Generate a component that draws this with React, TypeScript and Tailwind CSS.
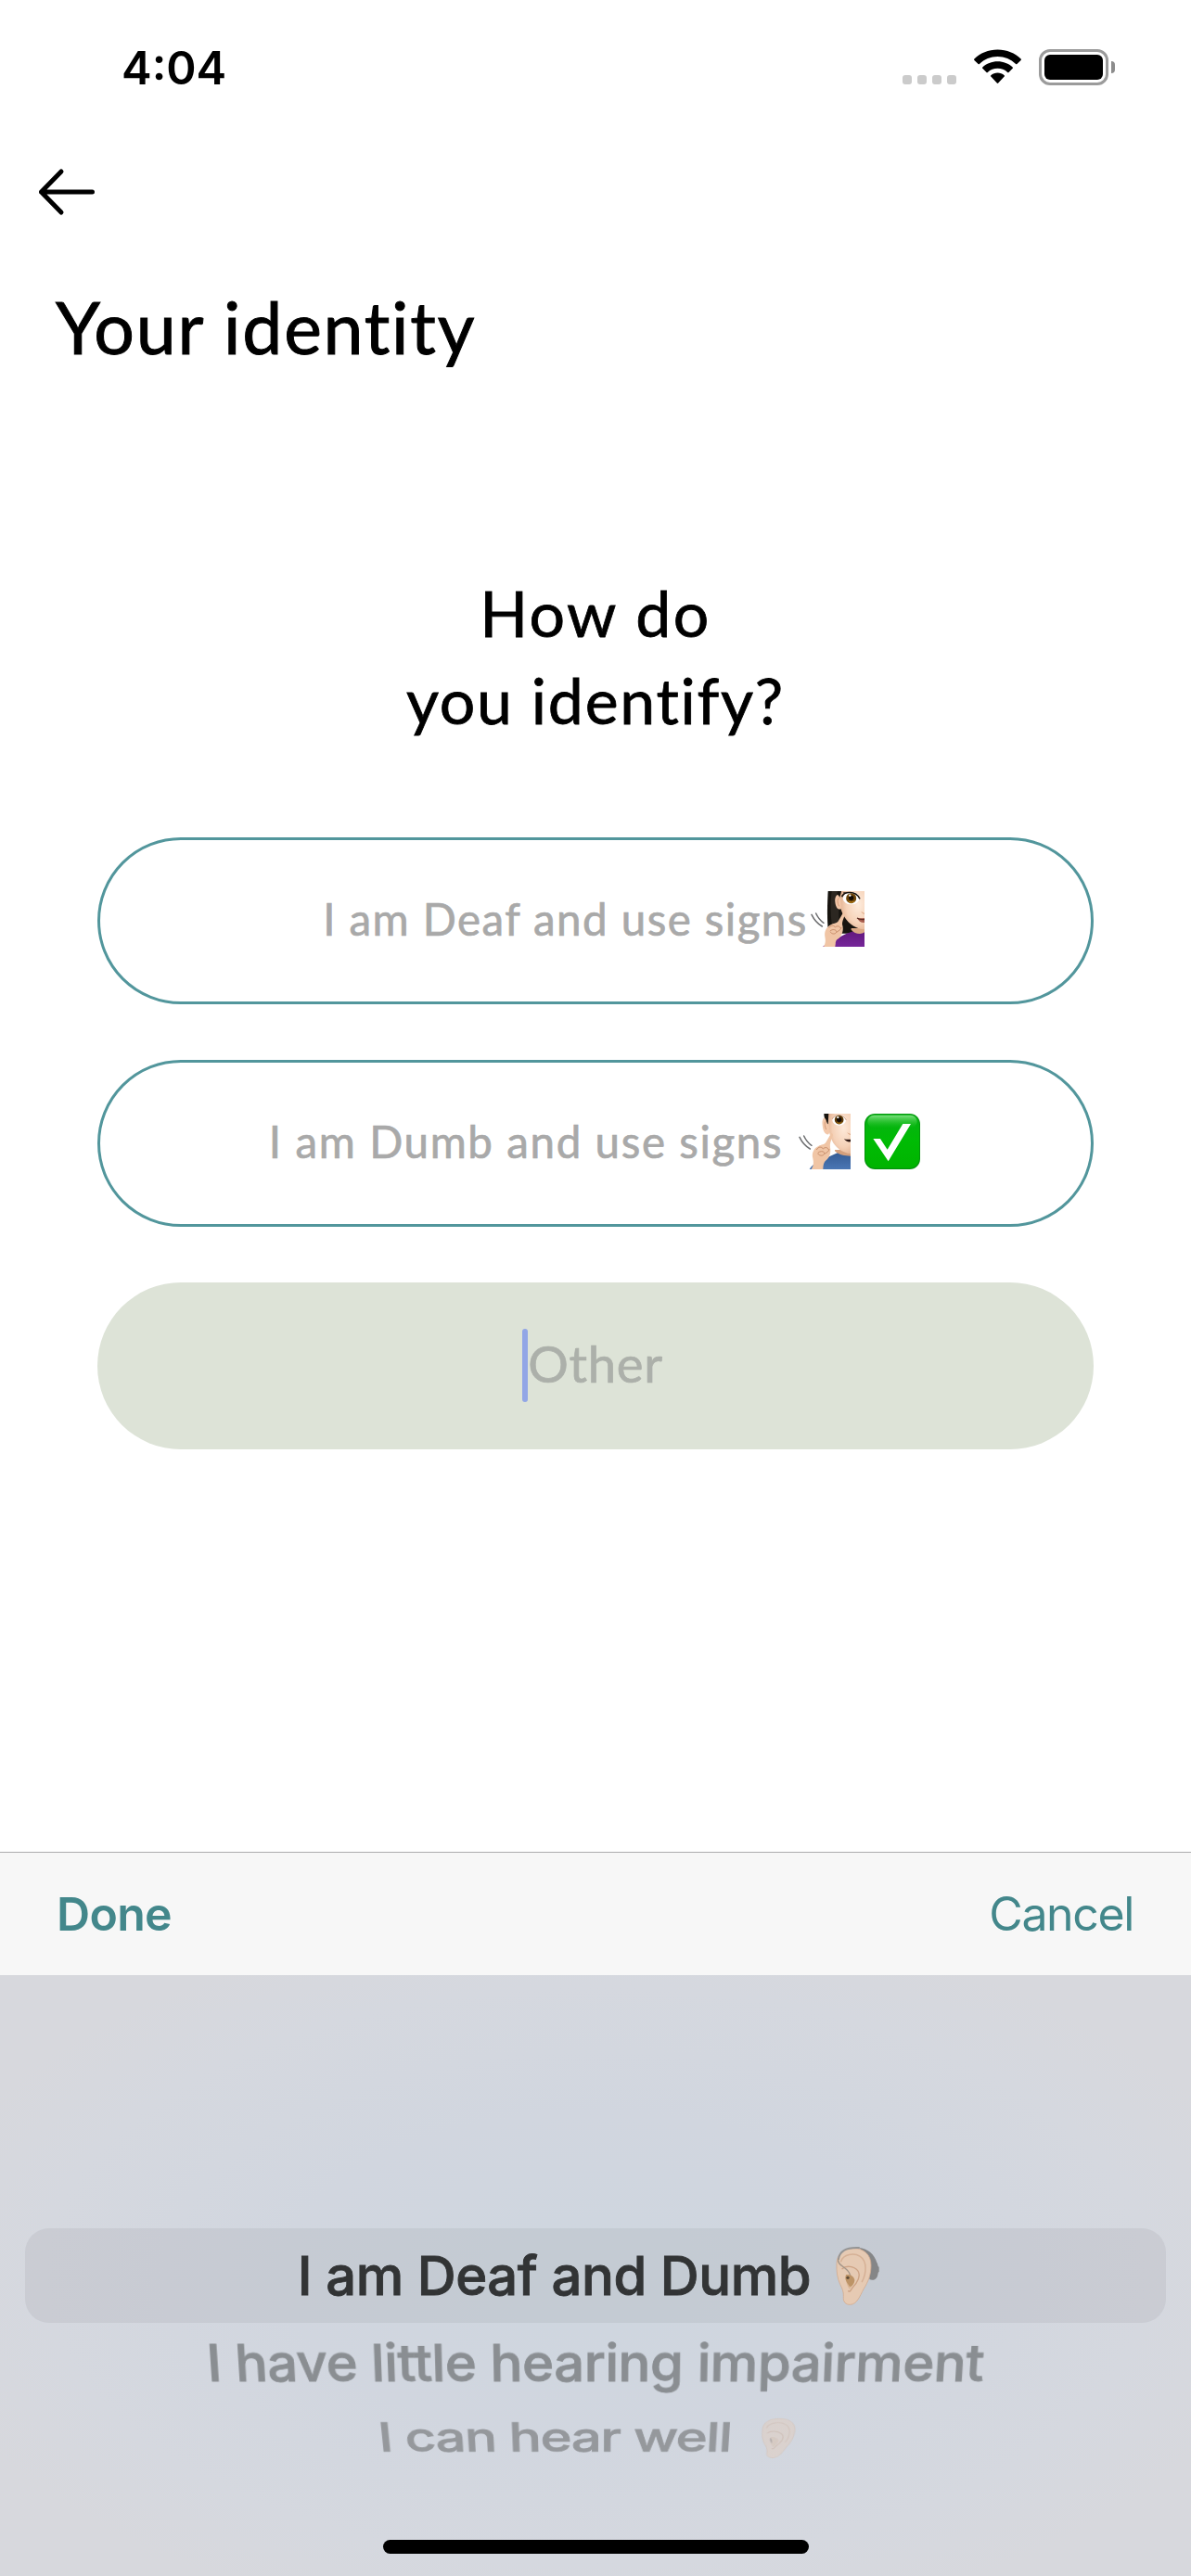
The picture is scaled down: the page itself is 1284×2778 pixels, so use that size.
import type { ReactNode } from "react";

function StatusBar() {
  return (
    <header className="flex h-[141px] items-start justify-between pl-[131px] pr-[82px] pt-[43px]">
      <span className="pt-px font-['Inter',sans-serif] text-[49px] font-semibold leading-[60px]">4:04</span>
      <div className="flex items-end pt-[10px]">
        <div className="mb-[1px] flex gap-[6px]">
          <i className="size-[10px] rounded-[3px] bg-[#cbcbcb]" />
          <i className="size-[10px] rounded-[3px] bg-[#cbcbcb]" />
          <i className="size-[10px] rounded-[3px] bg-[#cbcbcb]" />
          <i className="size-[10px] rounded-[3px] bg-[#cbcbcb]" />
        </div>
        <svg className="mb-[1px] ml-[19px] h-[38px] w-[51px]" viewBox="0 0 51 38">
          <path d="M25.500 0.500C35.500 0.500 44.200 4.200 50.600 10.600a.9.9 0 0 1 0 1.300L46.400 16a.9.9 0 0 1-1.300 0C39.800 10.900 33 8 25.500 8S11.200 10.900 5.900 16a.9.9 0 0 1-1.300 0L.4 11.900a.9.9 0 0 1 0-1.300C6.800 4.200 15.500.5 25.500.5Z" />
          <path d="M25.500 13.200c6.300 0 11.900 2.300 16.200 6.200a.9.9 0 0 1 0 1.300l-4.200 4.200a.9.9 0 0 1-1.300 0c-2.900-2.600-6.600-4.100-10.700-4.100s-7.800 1.500-10.700 4.100a.9.9 0 0 1-1.300 0l-4.200-4.200a.9.9 0 0 1 0-1.300c4.300-3.900 9.900-6.200 16.200-6.200Z" />
          <path d="M25.500 25.600c2.700 0 5.200 1 7.200 2.700a.9.9 0 0 1 0 1.300l-6.500 7a1 1 0 0 1-1.400 0l-6.500-7a.9.9 0 0 1 0-1.300c2-1.700 4.500-2.700 7.200-2.700Z" />
        </svg>
        <div className="ml-[19px] flex h-[39px] w-[75px] rounded-[12px] border-[3px] border-[#9b9b9b] p-[3px]">
          <div className="flex-1 rounded-[6px] bg-black" />
        </div>
        <div className="mb-[13px] ml-[3px] h-[13px] w-[4px] rounded-r-full bg-[#8c8c8c]" />
      </div>
    </header>
  );
}

function Spark() {
  return (
    <g fill="none" stroke="#6d6e70" strokeWidth="4.5" strokeLinecap="round">
      <path d="M108 169Q120 194 142 207" />
      <path d="M122 165Q131 185 147 196" />
    </g>
  );
}

function DeafWoman() {
  return (
    <svg className="h-[60px] w-[58px]" viewBox="105 93 174 180">
      <defs>
        <radialGradient id="skinW" cx="0.75" cy="0.35" r="0.8">
          <stop offset="0" stopColor="#fdebdc" />
          <stop offset="0.6" stopColor="#f6d3b9" />
          <stop offset="1" stopColor="#dfac8a" />
        </radialGradient>
        <linearGradient id="shirtW" x1="0" y1="0" x2="0" y2="1">
          <stop offset="0" stopColor="#5d1677" />
          <stop offset="1" stopColor="#76269a" />
        </linearGradient>
      </defs>
      <path d="M161 93H279V230H162C157 180 159 130 161 93Z" fill="#17140f" />
      <path d="M173 93H196V230H178C168 180 168 130 173 93Z" fill="#2c2721" />
      <path d="M144 273C160 260 180 255 206 238C225 226 250 222 279 213V273Z" fill="url(#shirtW)" />
      <path d="M236 213H279V226C266 236 246 230 236 218Z" fill="#dba884" />
      <path d="M203 93H279V217C255 216 228 200 214 176C203 160 198 140 199 118Z" fill="url(#skinW)" />
      <path d="M201 106C190 100 182 112 184 128C186 146 194 156 204 150Z" fill="#f2c6a8" />
      <path d="M198 116C191 116 190 130 197 142" fill="none" stroke="#d49a76" strokeWidth="3" />
      <path d="M192 93H204L199 114C196 108 192 104 190 102Z" fill="#17140f" />
      <ellipse cx="236" cy="116" rx="27" ry="20" fill="#fff" />
      <path d="M206 112C212 94 250 90 264 118" fill="none" stroke="#1a1512" strokeWidth="4.500" />
      <path d="M205 108L213 103M210 99L218 98" stroke="#1a1512" strokeWidth="3" />
      <circle cx="236" cy="116" r="16.500" fill="#6b4308" />
      <path d="M225 124A14 14 0 0 0 249 123A20 20 0 0 1 225 124Z" fill="#d79a20" />
      <circle cx="236" cy="115" r="8" fill="#120b05" />
      <circle cx="232" cy="107" r="3.500" fill="#fff" />
      <path d="M270 160Q273 166 279 166" fill="none" stroke="#d9a07c" strokeWidth="3" />
      <path d="M255 180C264 184 272 179 279 180V195C268 196 260 190 255 180Z" fill="#a95f50" />
      <path d="M255 180C264 186 272 184 279 185" fill="none" stroke="#5a2a23" strokeWidth="3.500" />
      <path d="M210 163C215 160 217 167 214 174C209 187 205 198 208 204C212 220 207 240 190 250C184 256 186 264 184 273H147C154 262 153 250 151 240C148 222 158 208 170 202C178 196 188 198 193 192Z" fill="#f0c5a5" />
      <path d="M164 212C170 202 182 204 184 210C190 204 200 206 202 214M168 222C176 214 190 218 188 226C184 234 172 232 168 224M188 226C196 222 204 216 204 210" fill="none" stroke="#c98f6c" strokeWidth="3" />
      <Spark />
    </svg>
  );
}

function DeafMan() {
  return (
    <svg className="h-[60px] w-[56px]" viewBox="63 63 168 180">
      <defs>
        <radialGradient id="skinM" cx="0.7" cy="0.35" r="0.8">
          <stop offset="0" stopColor="#fde9d9" />
          <stop offset="0.6" stopColor="#f5d1b7" />
          <stop offset="1" stopColor="#dca886" />
        </radialGradient>
        <linearGradient id="shirtM" x1="0" y1="0" x2="0" y2="1">
          <stop offset="0" stopColor="#355c94" />
          <stop offset="1" stopColor="#4a76b4" />
        </linearGradient>
      </defs>
      <path d="M98 243C108 225 135 212 162 202L190 189H231V243Z" fill="url(#shirtM)" />
      <path d="M180 180H231V200C212 200 192 196 180 184Z" fill="#d39f7c" />
      <path d="M156 63H231V193C205 190 180 172 170 148C162 130 157 100 156 63Z" fill="url(#skinM)" />
      <path d="M157 76C143 70 138 82 140 100C142 120 148 132 160 130L164 120Z" fill="#f3c8aa" />
      <path d="M155 88C147 84 145 98 152 114" fill="none" stroke="#d49a76" strokeWidth="3" />
      <path d="M145 63H160L158 97C154 96 154 84 148 78C145 73 145 68 145 63Z" fill="#17140f" />
      <ellipse cx="194" cy="84" rx="22" ry="17" fill="#fff" />
      <path d="M172 80C178 65 208 63 217 84" fill="none" stroke="#b98465" strokeWidth="2" />
      <circle cx="194" cy="83" r="14.500" fill="#5d3a08" />
      <path d="M184 90A13 13 0 0 0 205 89A18 18 0 0 1 184 90Z" fill="#d79a20" />
      <circle cx="194" cy="82" r="8" fill="#120b05" />
      <circle cx="190" cy="75" r="3.500" fill="#fff" />
      <path d="M222 125Q225 130 231 130" fill="none" stroke="#d9a07c" strokeWidth="3" />
      <path d="M210 144C217 148 224 146 231 146V154C222 155 214 151 210 144Z" fill="#2d1712" />
      <path d="M168 127C174 125 175 132 172 139C167 151 163 162 165 172C168 190 164 204 152 214C142 222 143 234 142 243H104C112 232 112 220 109 208C104 190 113 174 127 168C136 162 146 164 151 156Z" fill="#f0c5a5" />
      <path d="M121 180C127 168 139 170 142 177C148 170 158 172 160 180M125 190C134 182 148 184 146 193C142 201 130 200 125 192M146 193C154 190 161 184 162 178" fill="none" stroke="#c98f6c" strokeWidth="3" />
      <g transform="translate(-42 -30)">
        <Spark />
      </g>
    </svg>
  );
}

function CheckMark() {
  return (
    <svg className="size-[60px]" viewBox="276 63 180 180">
      <defs>
        <linearGradient id="tile" x1="0" y1="0" x2="0" y2="1">
          <stop offset="0" stopColor="#07b015" />
          <stop offset="0.5" stopColor="#00bb04" />
          <stop offset="1" stopColor="#00b400" />
        </linearGradient>
        <linearGradient id="gloss" x1="0" y1="0" x2="0" y2="1">
          <stop offset="0" stopColor="#8fe88f" stopOpacity="0.850" />
          <stop offset="1" stopColor="#2cc62c" stopOpacity="0" />
        </linearGradient>
      </defs>
      <rect x="276" y="63" width="180" height="180" rx="34" fill="#04930c" />
      <rect x="279" y="65" width="174" height="174" rx="31" fill="url(#tile)" />
      <rect x="286" y="68" width="160" height="42" rx="21" fill="url(#gloss)" />
      <path d="M304 144H327L350 179L400 96H426L353 217Z" fill="#fff" />
    </svg>
  );
}

function Ear({ aid = false, className }: { aid?: boolean; className: string }) {
  return (
    <svg className={className} viewBox="30 57 210 210">
      {aid && (
        <path d="M138 72C165 74 188 92 196 120C200 124 197 130 203 135V150C198 152 201 160 196 168C190 178 178 178 172 174L166 100Z" fill="#858687" />
      )}
      <path
        d="M110 256C95 257 86 246 88 230C89 214 84 204 77 190C68 170 65 150 66 122C67 92 88 74 120 74C155 74 177 95 177 128C177 160 168 182 153 206C141 228 132 255 110 256Z"
        fill="#e6cab3"
        stroke="#d3ac90"
        strokeWidth="2.500"
      />
      <path d="M80 116C88 92 122 88 142 100C166 116 162 156 148 182" fill="none" stroke="#d6b196" strokeWidth="4.500" strokeLinecap="round" />
      <path d="M84 140C96 128 122 132 134 146C146 162 132 186 118 200C112 210 108 216 104 212" fill="none" stroke="#cda385" strokeWidth="4" strokeLinecap="round" />
      <path d="M96 160C106 156 120 162 124 174C124 188 116 196 108 206C100 200 94 176 96 160Z" fill="#dcb898" />
      {aid ? (
        <>
          <path d="M72 108C76 82 98 70 138 72" fill="none" stroke="#959595" strokeWidth="6" strokeLinecap="round" />
          <path d="M71 106C66 134 104 132 110 162" fill="none" stroke="#a39587" strokeWidth="4" />
          <path d="M96 160C108 156 124 166 124 178C122 190 116 198 108 198C102 188 94 180 94 168Z" fill="#bd9467" />
          <circle cx="102" cy="169" r="5" fill="#5f4a35" />
        </>
      ) : (
        <path d="M95 162C93 172 97 182 102 188C102 178 102 168 95 162Z" fill="#7d6a5e" />
      )}
    </svg>
  );
}

function Option({ children }: { children: ReactNode }) {
  return (
    <button className="flex h-[180px] w-full items-center justify-center rounded-[90px] border-[3px] border-[#52969c] pb-1 text-[47.5px] leading-[60px] text-[#a9a9a9] [-webkit-text-stroke:0.7px]">
      {children}
    </button>
  );
}

export default function App() {
  return (
    <div className="flex h-[2778px] w-[1284px] flex-col overflow-hidden bg-white font-['Lato',sans-serif] text-black">
      <StatusBar />

      <nav className="flex h-[165px] items-start pl-[40px] pt-[40px]">
        <svg className="h-[52px] w-[64px]" viewBox="0 0 64 52" fill="none" stroke="#000" strokeWidth="5" strokeLinecap="round" strokeLinejoin="round">
          <path d="M59.500 26H4.500M26 4L4.500 26L26 48" />
        </svg>
      </nav>

      <h1 className="h-[308px] pl-[60px] text-[77px] leading-[92px] tracking-[1.750px] [-webkit-text-stroke:1px]">Your identity</h1>

      <main className="flex flex-1 flex-col px-[105px]">
        <h2 className="flex h-[289px] flex-col text-center text-[68px] leading-[94px] [-webkit-text-stroke:0.8px]">
          <span className="tracking-[2.380px]">How do</span>
          <span className="tracking-[1.700px]">you identify?</span>
        </h2>

        <div className="flex flex-col gap-[60px]">
          <Option>
            <span className="mr-[3px] pb-px tracking-[1.450px]">I am Deaf and use signs</span>
            <span className="mr-1">
              <DeafWoman />
            </span>
          </Option>
          <Option>
            <span className="mr-[17px] pb-px tracking-[1.610px]">I am Dumb and use signs</span>
            <span className="mr-[2px] flex gap-[15px]">
              <DeafMan />
              <CheckMark />
            </span>
          </Option>
          <div className="flex h-[180px] items-center justify-center rounded-[90px] bg-[#dde3d7] pb-[6px]">
            <span className="relative text-[54.500px] leading-[66px] tracking-[0.700px] text-[#acb0aa] [-webkit-text-stroke:0.7px]">
              Other
              <i className="absolute -left-[6px] -top-[4px] h-[79px] w-[6px] rounded-full bg-[#92a6e6]" />
            </span>
          </div>
        </div>
      </main>

      <div className="flex h-[133px] items-center justify-between border-t border-[#acacae] bg-[#f7f7f7] pl-[61px] pr-[62px] font-['Inter',sans-serif] text-[50px] leading-[60px] text-[#43878b]">
        <button className="font-semibold tracking-[-0.710px]">Done</button>
        <button className="tracking-[-1.370px]">Cancel</button>
      </div>

      <section className="flex h-[648px] flex-col bg-[#d7d8dd] bg-[radial-gradient(ellipse_58%_60%_at_50%_50%,#ced6df_0%,#d1d6df_45%,#d5d8df_80%,#d7d8dd_100%)] pt-[273px] font-['Inter',sans-serif] text-[58px] font-medium [-webkit-text-stroke:0.9px]">
        <div className="mx-[27px] flex h-[102px] items-center justify-center rounded-[26px] bg-[#787880]/12 leading-[102px] text-[#323435]">
          <span className="tracking-[-0.440px]">I am Deaf and Dumb</span>
          <Ear aid className="ml-[16px] mr-[3px] size-[70px] [-webkit-text-stroke:0]" />
        </div>
        <div className="flex h-[86px] items-center justify-center leading-[86px] text-[#8a8e92] [transform:perspective(2000px)_rotateX(-18deg)]">
          <span className="tracking-[-0.420px]">I have little hearing impairment</span>
        </div>
        <div className="flex h-[75px] items-center justify-center leading-[75px] text-[#95989c] [transform:perspective(2000px)_rotateX(-42deg)]">
          <span className="tracking-[-1.250px]">I can hear well</span>
          <Ear className="ml-[22px] size-[66px] opacity-40" />
        </div>
        <div className="mx-auto mb-[24px] mt-auto h-[15px] w-[459px] rounded-full bg-black" />
      </section>
    </div>
  );
}
